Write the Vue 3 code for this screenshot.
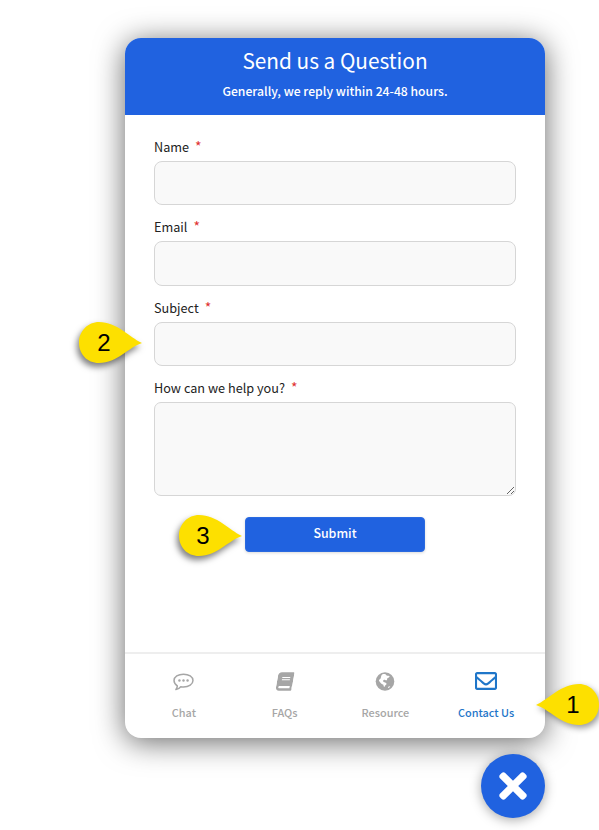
<script setup>
const fields = [
  { label: 'Name', kind: 'input' },
  { label: 'Email', kind: 'input' },
  { label: 'Subject', kind: 'input' },
  { label: 'How can we help you?', kind: 'textarea' },
]
const callouts = [
  { n: 1, cls: 'c1' },
  { n: 2, cls: 'c2' },
  { n: 3, cls: 'c3' },
]
</script>

<template>
  <div class="page">
    <section class="card">
      <header class="head">
        <h1>Send us a Question</h1>
        <p>Generally, we reply within 24-48 hours.</p>
      </header>

      <form class="form" @submit.prevent>
        <div v-for="f in fields" :key="f.label" class="field">
          <label>{{ f.label }}<span class="req">*</span></label>
          <textarea v-if="f.kind === 'textarea'"></textarea>
          <input v-else type="text" />
        </div>
        <button class="submit" type="submit">Submit</button>
      </form>

      <nav class="tabs">
        <a class="tab">
          <svg class="ico chat" viewBox="1 1 22 19">
            <path d="M12 2.200c5.600 0 10 2.900 10 6.800s-4.400 6.800-10 6.800c-1 0-2-.1-2.900-.3-1.200 1.500-3 2.600-5.100 3 .8-1 1.400-2.300 1.500-3.900C3.500 13.400 2 11.300 2 9c0-3.900 4.400-6.800 10-6.800z" fill="none" stroke="#a6a6a6" stroke-width="1.600" stroke-linejoin="round"/>
            <circle cx="7.700" cy="9" r="1.300" fill="#a6a6a6"/>
            <circle cx="12" cy="9" r="1.300" fill="#a6a6a6"/>
            <circle cx="16.300" cy="9" r="1.300" fill="#a6a6a6"/>
          </svg>
          <span>Chat</span>
        </a>
        <a class="tab">
          <svg class="ico book" viewBox="0 0 448 512">
            <path fill="#a6a6a6" d="M448 360V24c0-13.300-10.700-24-24-24H96C43 0 0 43 0 96v320c0 53 43 96 96 96h328c13.300 0 24-10.700 24-24v-16c0-7.500-3.500-14.300-8.900-18.700-4.200-15.400-4.200-59.300 0-74.700 5.400-4.300 8.900-11.100 8.900-18.600zM128 134c0-3.300 2.700-6 6-6h212c3.300 0 6 2.700 6 6v20c0 3.300-2.700 6-6 6H134c-3.300 0-6-2.700-6-6v-20zm0 64c0-3.300 2.700-6 6-6h212c3.300 0 6 2.700 6 6v20c0 3.300-2.700 6-6 6H134c-3.300 0-6-2.700-6-6v-20zm253.400 250H96c-17.700 0-32-14.300-32-32 0-17.600 14.400-32 32-32h285.400c-1.900 17.100-1.900 46.900 0 64z"/>
          </svg>
          <span>FAQs</span>
        </a>
        <a class="tab">
          <svg class="ico globe" viewBox="0 0 20 20">
            <circle cx="10" cy="10" r="9.800" fill="#a6a6a6"/>
            <path fill="#fff" d="M7 2.500c1.200-.5 2.600-.5 3.600-.2.700.7.800 1.500 1.900 1.600.9.100 1.700-.1 2.300.4.200.9-.5 1.500-1.300 1.800-1 .4-1.500 1.200-1.300 2.200-.5.600-1.400.3-2 .1-.9-.3-1.900-.1-2.200.7-.2.800.6 1.400 1.400 1.700.9.400 1.900.6 2.300 1.500-.1.800-.9 1.100-1.300 1.700-.5.600-.5 1.400-1.200 1.700-.7-.5-.8-1.400-.9-2.200-.7-.6-1.600-.9-2.400-1.500C4.700 11 3.800 10 3.600 8.800c.3-1 1.500-1.300 1.900-2.200.4-.9.200-1.900.7-2.800.2-.5.500-1 .8-1.300z"/>
            <path fill="#fff" d="M13.500 15.600c.6-.5 1.300-.7 2-.6-.2.900-1 1.600-1.900 1.900-.5-.4-.4-.9-.1-1.300z"/>
          </svg>
          <span>Resource</span>
        </a>
        <a class="tab active">
          <svg class="ico mail" viewBox="0 64 512 384" preserveAspectRatio="none">
            <path fill="#1f76c9" d="M464 64H48C21.490 64 0 85.490 0 112v288c0 26.510 21.490 48 48 48h416c26.510 0 48-21.490 48-48V112c0-26.510-21.490-48-48-48zm0 48v40.805c-22.422 18.259-58.168 46.651-134.587 106.490-16.841 13.247-50.201 45.072-73.413 44.701-23.208.375-56.579-31.459-73.413-44.701C106.180 199.465 70.425 171.067 48 152.805V112h416zM48 400V214.398c22.914 18.251 55.409 43.862 104.938 82.646 21.857 17.205 60.134 55.186 103.062 54.955 42.717.231 80.509-37.199 103.053-54.947 49.528-38.783 82.032-64.401 104.947-82.653V400H48z"/>
          </svg>
          <span>Contact Us</span>
        </a>
      </nav>
    </section>

    <button class="fab" type="button" aria-label="Close">
      <svg viewBox="0 0 352 512" width="28" height="40">
        <path fill="#fff" d="M242.720 256l100.070-100.070c12.280-12.280 12.280-32.190 0-44.480l-22.240-22.240c-12.280-12.280-32.190-12.280-44.480 0L176 189.280 75.930 89.210c-12.280-12.280-32.190-12.280-44.480 0L9.210 111.450c-12.280 12.280-12.280 32.190 0 44.480L109.280 256 9.210 356.070c-12.280 12.280-12.280 32.190 0 44.480l22.240 22.240c12.280 12.280 32.200 12.280 44.480 0L176 322.720l100.070 100.070c12.280 12.280 32.200 12.280 44.480 0l22.240-22.240c12.280-12.280 12.280-32.190 0-44.480L242.720 256z"/>
      </svg>
    </button>

    <div v-for="c in callouts" :key="c.n" class="callout" :class="c.cls">
      <svg viewBox="0 0 63 41" width="63" height="41">
        <path fill="#fde000" d="M63 21C50 25 38 41 20 41 8 41 0 32 0 20.500 0 9 9 0 20 0 38 0 50 15 63 21Z"/>
      </svg>
      <span>{{ c.n }}</span>
    </div>
  </div>
</template>

<style>
html, body { margin: 0; background: #fff; }
</style>

<style scoped>
.page {
  position: relative;
  width: 599px;
  height: 830px;
  overflow: hidden;
  background: #fff;
  padding-top: 38px;
  padding-left: 125px;
  box-sizing: border-box;
  font-family: "Noto Sans CJK SC", "Noto Sans", sans-serif;
}
.card {
  width: 420px;
  height: 700px;
  background: #fff;
  border-radius: 16px;
  overflow: hidden;
  box-shadow: 0 4px 30px rgba(0, 0, 0, 0.6);
  display: flex;
  flex-direction: column;
}
.head {
  height: 77px;
  flex: none;
  box-sizing: border-box;
  background: #2062e0;
  color: #fff;
  text-align: center;
  padding-top: 7px;
}
.head h1 {
  margin: 0;
  font-size: 20.8px;
  line-height: 30px;
  font-weight: 400;
}
.head p {
  margin: 6px 0 0;
  font-size: 12.2px;
  line-height: 20px;
  font-weight: 500;
}
.form {
  flex: 1;
  padding: 21.7px 29px 0;
  display: flex;
  flex-direction: column;
}
.field {
  display: flex;
  flex-direction: column;
  margin-bottom: 12px;
}
.field label {
  font-size: 12.7px;
  line-height: 20px;
  height: 22px;
  margin-bottom: 2px;
  color: #222;
}
.req {
  color: #e03131;
  margin-left: 6px;
  font-size: 14px;
  line-height: 0;
}
.field input,
.field textarea {
  box-sizing: border-box;
  width: 362px;
  height: 44.6px;
  background: #f9f9f9;
  border: 1px solid #d6d6d6;
  border-radius: 8px;
  margin: 0;
  display: block;
  outline: none;
}
.field textarea {
  height: 94px;
  border-radius: 7px;
}
.submit {
  width: 180px;
  height: 35px;
  align-self: flex-start;
  margin: 8.5px 0 0 91px;
  padding: 0 0 2px;
  background: #2062e0;
  color: #fff;
  border: 1px solid #2a6ae0;
  border-radius: 4px;
  font-family: inherit;
  font-size: 12.4px;
  font-weight: 500;
  box-shadow: 0 1px 3px rgba(0, 0, 0, 0.15);
}
.tabs {
  height: 86px;
  flex: none;
  box-sizing: border-box;
  border-top: 2px solid #eeeeee;
  padding: 0 8.5px;
  display: grid;
  grid-template-columns: repeat(4, 1fr);
}
.tab {
  display: flex;
  flex-direction: column;
  align-items: center;
  color: #a6a6a6;
  font-size: 10.9px;
  font-weight: 500;
  line-height: 16px;
  padding-top: 18px;
}
.tab .ico {
  display: block;
  width: 20px;
  height: 19px;
  margin-bottom: 13px;
}
.tab .chat {
  width: 21px;
  height: 18px;
  margin-top: 1px;
}
.tab .book {
  width: 16px;
  height: 19px;
  transform: skewX(-10deg);
}
.tab .mail {
  width: 22px;
  height: 18px;
  margin-bottom: 14px;
}
.tab.active {
  color: #1f76c9;
}
.fab {
  position: absolute;
  left: 481px;
  top: 754px;
  width: 64px;
  height: 64px;
  border-radius: 50%;
  border: 0;
  padding: 0;
  background: #2062e0;
  box-shadow: 0 2px 12px rgba(0, 0, 0, 0.35);
  display: flex;
  align-items: center;
  justify-content: center;
}
.callout {
  position: absolute;
  width: 63px;
  height: 41px;
}
.callout svg {
  display: block;
  filter: drop-shadow(-2px 4px 3px rgba(0, 0, 0, 0.5));
}
.callout span {
  position: absolute;
  top: 0;
  left: 5px;
  width: 38px;
  font-family: "Liberation Sans", Arial, sans-serif;
  font-size: 24px;
  line-height: 41px;
  text-align: center;
  color: #000;
}
.c1 { left: 536px; top: 684px; }
.c1 svg { transform: scaleX(-1); filter: drop-shadow(-2px 3px 3px rgba(0, 0, 0, 0.4)); }
.c1 span { left: 18px; }
.c2 { left: 79px; top: 322px; }
.c2 span { left: 6px; }
.c3 { left: 179px; top: 515px; }
</style>
